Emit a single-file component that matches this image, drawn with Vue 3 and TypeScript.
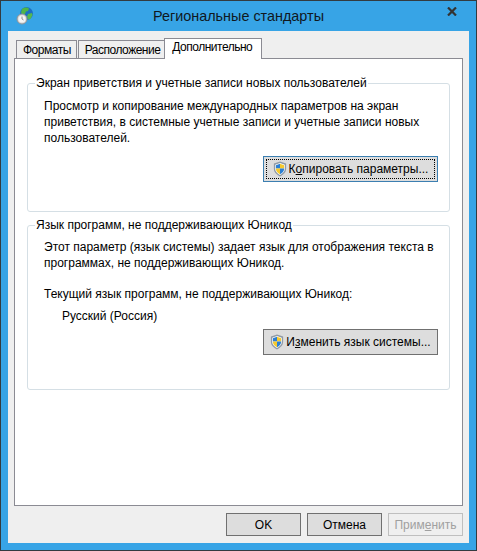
<script setup lang="ts">
const tabs = [
  { label: 'Форматы', active: false },
  { label: 'Расположение', active: false },
  { label: 'Дополнительно', active: true },
]
</script>

<template>
  <div class="window">
    <header class="titlebar">
      <svg class="app-icon" width="24" height="24" viewBox="0 0 24 24">
        <circle cx="15.500" cy="7.500" r="6.500" fill="#1b6fc4" />
        <path d="M11 3c2-1.500 5-2 7-.5l-1 2.500-2 .5-1 2.500-2.500 .5-1.500-2z" fill="#4fb548" />
        <path d="M17 8l4-1 .5 2-2 4-2.500 .5-1-3z" fill="#57b84e" />
        <circle cx="11" cy="13" r="5" fill="#d6d6d6" stroke="#8d9499" stroke-width="1" />
        <circle cx="11" cy="13" r="3.500" fill="#f4f4f4" />
        <path d="M11 10.500v2.500l1.500 1" fill="none" stroke="#777" stroke-width=".8" />
      </svg>
      <span class="title">Региональные стандарты</span>
      <svg class="close" width="10" height="9" viewBox="0 0 10 9">
        <path d="M1 .5l8 8M9 .5l-8 8" stroke="#333" stroke-width="2.200" fill="none" />
      </svg>
    </header>

    <div class="client">
      <nav class="tabs">
        <div v-for="t in tabs" :key="t.label" class="tab" :class="{ active: t.active }">{{ t.label }}</div>
      </nav>

      <main class="page">
        <fieldset class="group first">
          <legend>Экран приветствия и учетные записи новых пользователей</legend>
          <p class="text">Просмотр и копирование международных параметров на экран приветствия, в системные учетные записи и учетные записи новых пользователей.</p>
          <div class="btn-row">
            <button class="btn wide focused">
              <span class="focus-ring">
                <svg class="shield" width="14" height="16" viewBox="0 0 16 18">
                  <path d="M8 .5l7 2.300v6c0 4-3 6.700-7 8.700-4-2-7-4.700-7-8.700v-6z" fill="#8f9aa6" />
                  <path d="M8 2.200l5.500 1.800v4.800c0 3.200-2.300 5.300-5.500 7-3.200-1.700-5.500-3.800-5.500-7V4z" fill="#fff" />
                  <path d="M8 3L3.300 4.600V8.500H8z" fill="#2a7fd4" />
                  <path d="M8 3l4.700 1.600V8.500H8z" fill="#f5c92e" />
                  <path d="M3.300 8.500H8v6.600c-2.700-1.500-4.700-3.400-4.700-6.300z" fill="#f5c92e" />
                  <path d="M12.700 8.500H8v6.600c2.700-1.500 4.700-3.400 4.700-6.300z" fill="#2a7fd4" />
                </svg>
                <span>К<u>о</u>пировать параметры...</span>
              </span>
            </button>
          </div>
        </fieldset>

        <fieldset class="group second">
          <legend>Язык программ, не поддерживающих Юникод</legend>
          <p class="text">Этот параметр (язык системы) задает язык для отображения текста в программах, не поддерживающих Юникод.</p>
          <p class="text current">Текущий язык программ, не поддерживающих Юникод:</p>
          <p class="text locale">Русский (Россия)</p>
          <div class="btn-row">
            <button class="btn wide">
              <span class="focus-ring plain">
                <svg class="shield" width="14" height="16" viewBox="0 0 16 18">
                  <path d="M8 .5l7 2.300v6c0 4-3 6.700-7 8.700-4-2-7-4.700-7-8.700v-6z" fill="#8f9aa6" />
                  <path d="M8 2.200l5.500 1.800v4.800c0 3.200-2.300 5.300-5.500 7-3.200-1.700-5.500-3.800-5.500-7V4z" fill="#fff" />
                  <path d="M8 3L3.300 4.600V8.500H8z" fill="#2a7fd4" />
                  <path d="M8 3l4.700 1.600V8.500H8z" fill="#f5c92e" />
                  <path d="M3.300 8.500H8v6.600c-2.700-1.500-4.700-3.400-4.700-6.300z" fill="#f5c92e" />
                  <path d="M12.700 8.500H8v6.600c2.700-1.500 4.700-3.400 4.700-6.300z" fill="#2a7fd4" />
                </svg>
                <span>И<u>з</u>менить язык системы...</span>
              </span>
            </button>
          </div>
        </fieldset>
      </main>

      <footer class="actions">
        <button class="btn small">OK</button>
        <button class="btn small">Отмена</button>
        <button class="btn small disabled">Прим<u>е</u>нить</button>
      </footer>
    </div>
  </div>
</template>

<style>
html, body { margin: 0; background: #37a4e6; }
</style>

<style scoped>
.window {
  box-sizing: border-box;
  width: 477px;
  height: 551px;
  border: 1px solid #333b40;
  background: #37a4e6;
  padding: 0 7px 7px;
  display: flex;
  flex-direction: column;
  font-family: "Liberation Sans", Arial, sans-serif;
  font-size: 12px;
  color: #000;
  overflow: hidden;
}
.titlebar {
  height: 30px;
  flex-shrink: 0;
  position: relative;
  display: flex;
  align-items: center;
  justify-content: center;
}
.app-icon { position: absolute; left: 3px; top: 5px; }
.title { font-size: 14.4px; color: #10181e; margin-top: -1px; }
.close { position: absolute; right: 12px; top: 6px; }
.client {
  flex: 1;
  background: #efefef;
  padding: 7px 6px 7px;
  display: flex;
  flex-direction: column;
}
.tabs {
  display: flex;
  align-items: flex-end;
  height: 20px;
  padding-left: 2px;
  gap: 1px;
  position: relative;
  z-index: 1;
}
.tab {
  box-sizing: border-box;
  height: 18px;
  padding: 0 5px 0 6px;
  line-height: 18px;
  border: 1px solid #8b8b93;
  border-bottom: none;
  background: #efefef;
  white-space: nowrap;
  letter-spacing: -.5px;
}
.tab.active {
  height: 21px;
  margin-bottom: -1px;
  background: #fff;
  padding: 0 9px 0 7px;
  line-height: 17px;
  margin-left: -3px;
  position: relative;
}
.page {
  box-sizing: border-box;
  height: 448px;
  border: 1px solid #8b8b93;
  background: #fff;
  padding: 16px 12px 0 12px;
  display: flex;
  flex-direction: column;
  gap: 5px;
}
.group {
  margin: 0;
  padding: 0 15px 0 16px;
  border: 1px solid #d5dfe5;
  border-radius: 3px;
  min-width: 0;
}
.group.first { height: 135px; }
.group.second { height: 171px; }
legend { padding: 0 1px; margin-left: -9px; line-height: 16px; }
.text { margin: 0; line-height: 16px; }
.first .text { margin-top: 7px; }
.second .text { margin-top: 6px; }
.second .text.current { margin-top: 15px; }
.second .text.locale { margin-top: 6px; padding-left: 18px; }
.btn-row { display: flex; justify-content: flex-end; margin-right: -4px; }
.first .btn-row { margin-top: 10px; }
.second .btn-row { margin-top: 5px; }
.btn {
  box-sizing: border-box;
  border: 1px solid #707070;
  background: #dddddd;
  font: inherit;
  color: #000;
  padding: 0;
  white-space: nowrap;
}
.btn.wide { width: 175px; height: 26px; padding: 2px; }
.btn.focused { border-color: #3c7fb1; }
.focus-ring {
  box-sizing: border-box;
  height: 100%;
  display: flex;
  align-items: center;
  justify-content: center;
  gap: 2px;
  border: 1px dotted #000;
}
.focus-ring.plain { border-color: transparent; }
.actions {
  display: flex;
  justify-content: flex-end;
  gap: 6px;
  margin-top: 7px;
}
.btn.small { width: 75px; height: 23px; }
.btn.disabled { background: #efefef; border-color: #bfbfbf; color: #a0a0a0; }
</style>
